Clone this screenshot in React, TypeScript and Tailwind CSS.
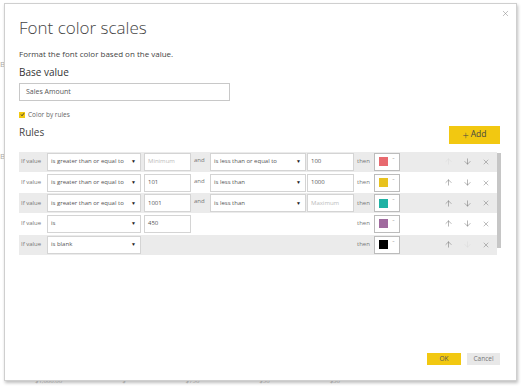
import React from "react";
import { ArrowUp, ArrowDown, X } from "lucide-react";

const font = { fontFamily: '"Open Sans", "Noto Sans", sans-serif' };

function Select({ text, w }: { text: string; w: string }) {
  return (
    <div className={`${w} h-[18px] bg-white border border-[#d4d4d4] flex items-center justify-between pl-[3px] pr-[4px] text-[6px] text-[#555] shrink-0`}>
      <span>{text}</span>
      <span className="text-[5px] text-[#222]">▼</span>
    </div>
  );
}

function Input({ text, placeholder }: { text?: string; placeholder?: string }) {
  return (
    <div className="w-[47px] h-[18px] bg-white border border-[#d4d4d4] flex items-center pl-[3px] text-[6px] shrink-0">
      {text ? <span className="text-[#555]">{text}</span> : <span className="text-[#bbb]">{placeholder}</span>}
    </div>
  );
}

function ColorBox({ color }: { color: string }) {
  return (
    <div className="w-[26px] h-[18px] bg-white border border-[#bcbcbc] flex items-center pl-[4px] gap-[4px] shrink-0">
      <div className="w-[9px] h-[9px]" style={{ background: color }} />
      <span className="text-[7px] text-[#aaa] leading-none -mt-[3px]">ˇ</span>
    </div>
  );
}

type Row = {
  op1: string;
  v1?: string;
  p1?: string;
  op2?: string;
  v2?: string;
  p2?: string;
  color: string;
  gray: boolean;
  noUp?: boolean;
  noDown?: boolean;
  blank?: boolean;
  h: string;
};

const rows: Row[] = [
  { op1: "is greater than or equal to", p1: "Minimum", op2: "is less than or equal to", v2: "100", color: "#e86a6f", gray: true, noUp: true, h: "h-[21px]" },
  { op1: "is greater than or equal to", v1: "101", op2: "is less than", v2: "1000", color: "#e8c21e", gray: false, h: "h-[22px]" },
  { op1: "is greater than or equal to", v1: "1001", op2: "is less than", p2: "Maximum", color: "#1fb2a4", gray: true, h: "h-[21px]" },
  { op1: "is", v1: "450", color: "#a06a9e", gray: false, h: "h-[22px]" },
  { op1: "is blank", blank: true, color: "#000000", gray: true, noDown: true, h: "h-[21px]" },
];

function RuleRow({ r }: { r: Row }) {
  return (
    <div className={`${r.h} w-[478px] flex items-center ${r.gray ? "bg-[#ebebeb]" : "bg-white"} text-[6px] text-[#777]`}>
      <div className="w-[28px] pl-[2px] shrink-0">If value</div>
      <Select text={r.op1} w="w-[94px]" />
      {r.blank ? (
        <div className="w-[213px] shrink-0" />
      ) : (
        <>
          <div className="w-[3px] shrink-0" />
          <Input text={r.v1} placeholder={r.p1} />
          {r.op2 ? (
            <>
              <div className="w-[16px] ml-[3px] shrink-0 -mt-[3px]">and</div>
              <Select text={r.op2} w="w-[96px]" />
              <div className="w-[1px] shrink-0" />
              <Input text={r.v2} placeholder={r.p2} />
            </>
          ) : (
            <div className="w-[163px] shrink-0" />
          )}
        </>
      )}
      <div className="w-[3px] shrink-0" />
      <div className="w-[17px] shrink-0">then</div>
      <ColorBox color={r.color} />
      <div className="flex items-center ml-[44px] gap-[10px]">
        <ArrowUp size={9} strokeWidth={1.3} className={r.noUp ? "text-[#d8d8d8]" : "text-[#666]"} />
        <ArrowDown size={9} strokeWidth={1.3} className={r.noDown ? "text-[#d8d8d8]" : "text-[#666]"} />
        <X size={8} strokeWidth={1.3} className="text-[#666]" />
      </div>
    </div>
  );
}

export default function App() {
  return (
    <div className="w-[521px] h-[386px] bg-white overflow-hidden relative" style={font}>
      <div className="absolute left-0 top-[58px] text-[8px] text-[#aaa]">B</div>
      <div className="absolute left-0 top-[150px] text-[8px] text-[#aaa]">B</div>
      <div className="absolute left-[10px] bottom-[0px] flex gap-[60px] text-[6px] text-[#bbb]">
        <span className="ml-[25px]">$1,000.00</span>
        <span>$</span>
        <span>$750</span>
        <span>$50</span>
        <span>$30</span>
      </div>
      <div className="ml-[4px] mt-[3px] w-[513px] h-[378px] bg-white border border-[#cfcfcf] shadow-[1px_2px_3px_rgba(0,0,0,0.25)] relative flex flex-col pl-[14px] pr-[16px]">
        <X size={9} strokeWidth={1.4} className="absolute right-[6px] top-[5px] text-[#888]" />
        <div className="mt-[12px] text-[17px] font-light text-[#444] leading-[24px]">Font color scales</div>
        <div className="mt-[8px] text-[8px] text-[#444] leading-[12px]">Format the font color based on the value.</div>
        <div className="mt-[5px] text-[10px] font-medium text-[#333] leading-[14px]">Base value</div>
        <div className="mt-[4px] w-[211px] h-[18px] border border-[#c8c8c8] flex items-center pl-[6px] text-[7px] text-[#555]">Sales Amount</div>
        <div className="mt-[9px] flex items-center gap-[3px] text-[6.5px] text-[#666]">
          <div className="w-[6px] h-[6px] bg-[#f2c811] flex items-center justify-center">
            <svg width="5" height="5" viewBox="0 0 10 10"><path d="M2 5 L4 7.5 L8 2.5" stroke="#333" strokeWidth="1.8" fill="none" /></svg>
          </div>
          <span>Color by rules</span>
        </div>
        <div className="flex items-end justify-between mt-[5px]">
          <div className="text-[10px] text-[#444] leading-[14px] mb-[5px]">Rules</div>
          <div className="w-[51px] h-[18px] bg-[#f2c811] flex items-center justify-center text-[8.5px] text-[#444] mr-[0px]">
            <span className="text-[11px] font-light mr-[2px] leading-none">+</span>Add
          </div>
        </div>
        <div className="mt-[8px] w-[482px] h-[103px] overflow-hidden flex">
          <div className="flex flex-col">
            {rows.map((r, i) => (
              <RuleRow key={i} r={r} />
            ))}
          </div>
          <div className="w-[4px] h-[95px] mt-[1px] bg-[#c6c6c6]" />
        </div>
        <div className="flex-1" />
        <div className="flex justify-end gap-[6px] mb-[15px] mr-[0px] text-[6.5px]">
          <div className="w-[34px] h-[12px] bg-[#f2c811] flex items-center justify-center text-[#555]">OK</div>
          <div className="w-[33px] h-[12px] bg-[#e8e8e8] flex items-center justify-center text-[#777]">Cancel</div>
        </div>
      </div>
    </div>
  );
}
